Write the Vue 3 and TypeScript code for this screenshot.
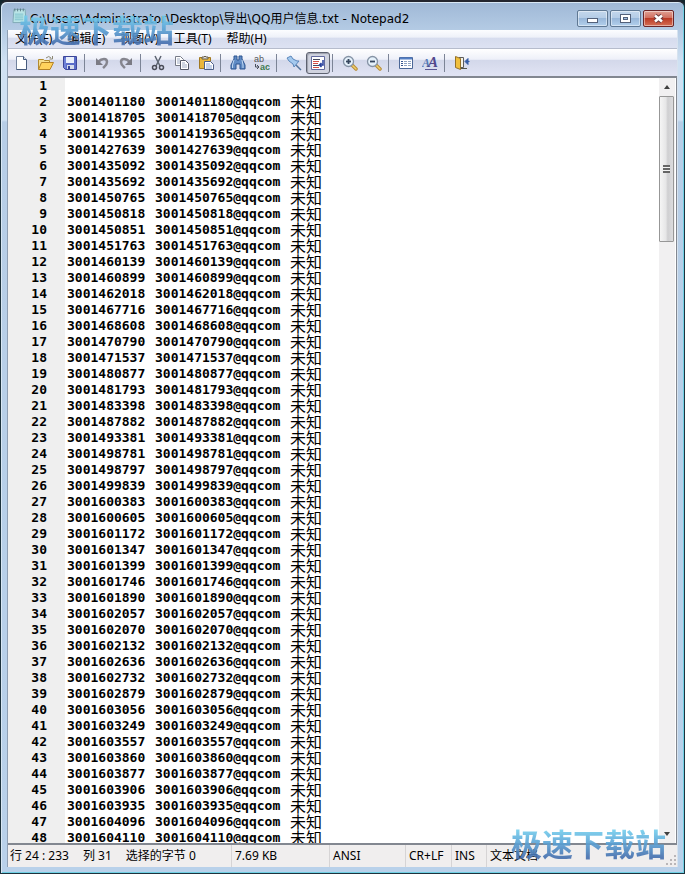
<script setup lang="ts">
interface Tool {
  id: string
  label: string
  pressed?: boolean
}

const menus: string[] = ['文件(F)', '编辑(E)', '视图(V)', '工具(T)', '帮助(H)']

const toolGroups: Tool[][] = [
  [
    { id: 'new', label: '新建' },
    { id: 'open', label: '打开' },
    { id: 'save', label: '保存' },
  ],
  [
    { id: 'undo', label: '撤销' },
    { id: 'redo', label: '重做' },
  ],
  [
    { id: 'cut', label: '剪切' },
    { id: 'copy', label: '复制' },
    { id: 'paste', label: '粘贴' },
  ],
  [
    { id: 'find', label: '查找' },
    { id: 'replace', label: '替换' },
  ],
  [
    { id: 'pin', label: '置顶' },
    { id: 'wrap', label: '自动换行', pressed: true },
  ],
  [
    { id: 'zoomin', label: '放大' },
    { id: 'zoomout', label: '缩小' },
  ],
  [
    { id: 'scheme', label: '语法方案' },
    { id: 'font', label: '自定义方案' },
  ],
  [{ id: 'exit', label: '退出' }],
]

const accounts: string[] = [
  '', '3001401180', '3001418705', '3001419365', '3001427639', '3001435092', '3001435692',
  '3001450765', '3001450818', '3001450851', '3001451763', '3001460139', '3001460899',
  '3001462018', '3001467716', '3001468608', '3001470790', '3001471537', '3001480877',
  '3001481793', '3001483398', '3001487882', '3001493381', '3001498781', '3001498797',
  '3001499839', '3001600383', '3001600605', '3001601172', '3001601347', '3001601399',
  '3001601746', '3001601890', '3001602057', '3001602070', '3001602132', '3001602636',
  '3001602732', '3001602879', '3001603056', '3001603249', '3001603557', '3001603860',
  '3001603877', '3001603906', '3001603935', '3001604096', '3001604110',
]
</script>

<template>
  <div class="window">
    <header class="titlebar">
      <svg class="app-icon" viewBox="0 0 16 18" aria-hidden="true">
        <path d="M2 2h12l1 14H1z" fill="#b9e4e6" stroke="#7fa9b4" />
        <path d="M3 7h9M3 9h9M3 11h9M3 13h9" stroke="#7dc1cb" />
        <path d="M3 1v3M6 1v3M9 1v3M12 1v3" stroke="#5b7884" />
      </svg>
      <h1 class="title">C:\Users\Administrator\Desktop\导出\QQ用户信息.txt - Notepad2</h1>
      <div class="caption">
        <button type="button" aria-label="最小化">
          <svg viewBox="0 0 28 15"><rect x="9.500" y="7.500" width="10" height="4" fill="#fff" stroke="#53617a" /></svg>
        </button>
        <button type="button" aria-label="最大化">
          <svg viewBox="0 0 28 15">
            <rect x="9.500" y="3.500" width="10" height="8" fill="#fff" stroke="#53617a" />
            <rect x="12.500" y="6.500" width="4" height="2" fill="#9fbfe0" stroke="#53617a" />
          </svg>
        </button>
        <button type="button" class="close" aria-label="关闭">
          <svg viewBox="0 0 28 15">
            <path d="M11 4.500l7 6M18 4.500l-7 6" stroke="#6b3a3c" stroke-width="4.500" />
            <path d="M11 4.500l7 6M18 4.500l-7 6" stroke="#fff" stroke-width="2.600" />
          </svg>
        </button>
      </div>
    </header>

    <main class="client">
      <nav class="menubar">
        <button v-for="menu in menus" :key="menu" type="button">{{ menu }}</button>
      </nav>

      <div class="toolbar" role="toolbar">
        <div v-for="(group, g) in toolGroups" :key="g" class="group">
          <button
            v-for="tool in group"
            :key="tool.id"
            type="button"
            :class="{ pressed: tool.pressed }"
            :aria-label="tool.label"
            :aria-pressed="tool.pressed"
          >
            <svg v-if="tool.id === 'new'" viewBox="0 0 16 16">
              <path d="M2.500 1.500h7l3 3v10h-10z" fill="#fff" stroke="#72829d" />
              <path d="M9.500 1.500v3h3" fill="#d5e0ee" stroke="#465a7d" />
              <path d="M12.500 5v9.500h-10" fill="none" stroke="#465a7d" />
            </svg>
            <svg v-else-if="tool.id === 'open'" viewBox="0 0 16 16">
              <path d="M.5 14V4.500h5l1 1h5V8" fill="#f6df91" stroke="#b38b2f" />
              <path d="M.5 14.500l3-7h12l-3.500 7z" fill="#ffd25c" stroke="#b38226" />
              <path d="M8 3q3-3 5 0M14.500 1v3h-3" fill="none" stroke="#8c8873" />
            </svg>
            <svg v-else-if="tool.id === 'save'" viewBox="0 0 16 16">
              <path d="M1.500 1.500h13v13h-11l-2-2z" fill="#5a6cc8" stroke="#3c4699" />
              <path d="M4 2h8v6H4z" fill="#e9effb" />
              <path d="M5 10h7v4H5z" fill="#d6dcea" />
              <path d="M6 11h2v3H6z" fill="#33439a" />
              <path d="M3 3v10" stroke="#8298e8" />
            </svg>
            <svg v-else-if="tool.id === 'undo'" viewBox="0 0 16 16">
              <path d="M4 7c4-4 9-4 9 0 0 3-2 4-4 6" fill="none" stroke="#85858e" stroke-width="2.500" />
              <path d="M2 3v7h7z" fill="#7b7b84" />
            </svg>
            <svg v-else-if="tool.id === 'redo'" viewBox="0 0 16 16">
              <path d="M12 7C8 3 3 3 3 7c0 3 2 4 4 6" fill="none" stroke="#85858e" stroke-width="2.500" />
              <path d="M14 3v7H7z" fill="#7b7b84" />
            </svg>
            <svg v-else-if="tool.id === 'cut'" viewBox="0 0 16 16">
              <path d="M5 1l5 10M11 1L6 11" fill="none" stroke="#5c6470" stroke-width="1.500" />
              <circle cx="4.500" cy="12.500" r="2" fill="none" stroke="#4a4d58" stroke-width="1.500" />
              <circle cx="11.500" cy="12.500" r="2" fill="none" stroke="#4a4d58" stroke-width="1.500" />
            </svg>
            <svg v-else-if="tool.id === 'copy'" viewBox="0 0 16 16">
              <path d="M1.500 1.500h5l3 3v6h-8z" fill="#fff" stroke="#777b87" />
              <path d="M6.500 5.500h5l3 3v6h-8z" fill="#fff" stroke="#555a68" />
              <path d="M3 4h3M3 6h3M3 8h3M8 8h3M8 10h5M8 12h5" stroke="#9eabc3" />
            </svg>
            <svg v-else-if="tool.id === 'paste'" viewBox="0 0 16 16">
              <path d="M1.500 2.500h11v11h-11z" fill="#e9b63b" stroke="#a17821" />
              <path d="M4 4V2h2l1-1 1 1h2v2z" fill="#ddd" stroke="#665c48" />
              <path d="M6.500 6.500h6l3 3v5h-9z" fill="#fff" stroke="#4d5f88" />
              <path d="M8 9h4M8 11h6M8 13h6" stroke="#8ba5d4" />
            </svg>
            <svg v-else-if="tool.id === 'find'" viewBox="0 0 16 16">
              <path d="M4 1h3v4h2V1h3v3l3 6v4h-5V9H6v5H1v-4l3-6z" fill="#5f8ac4" stroke="#2c5490" />
              <path d="M4 5L2.500 10v3M12 5l1 5v3" fill="none" stroke="#bed6f0" />
            </svg>
            <svg v-else-if="tool.id === 'replace'" viewBox="0 0 16 16">
              <text x="0" y="7" class="glyph-ab">ab</text>
              <text x="6" y="15" class="glyph-ac">ac</text>
              <path d="M1.500 9v3h3M3 10l2 2-2 2" fill="none" stroke="#474d5a" />
            </svg>
            <svg v-else-if="tool.id === 'pin'" viewBox="0 0 16 16">
              <path d="M9 9l6 6" stroke="#54749c" stroke-width="1.500" />
              <path d="M1 3l4-2 2 3 4 2 2 0-5 6-1-3-4-3z" fill="#a4c9ee" stroke="#5c88bc" />
            </svg>
            <svg v-else-if="tool.id === 'wrap'" viewBox="0 0 16 16">
              <path d="M1.500 1.500h13v13h-13z" fill="#fff" stroke="#626a9f" />
              <path d="M3 4.500h7M3 10.500h6" stroke="#444a60" />
              <path d="M3 6.500h6M3 8.500h5M3 12.500h6" stroke="#d44d46" />
              <path d="M13 5v5h-3M11.500 8l-2 2 2 2" fill="none" stroke="#263f9c" stroke-width="1.500" />
            </svg>
            <svg v-else-if="tool.id === 'zoomin' || tool.id === 'zoomout'" viewBox="0 0 16 16">
              <path d="M10 10l4 4" stroke="#b78c34" stroke-width="3.500" stroke-linecap="round" />
              <path d="M10 10l4 4" stroke="#efcf6e" stroke-width="1.500" stroke-linecap="round" />
              <circle cx="6.500" cy="6.500" r="5" fill="#e5f1fb" stroke="#8593a5" stroke-width="1.300" />
              <path d="M4 6.500h5" stroke="#35465e" stroke-width="1.800" />
              <path v-if="tool.id === 'zoomin'" d="M6.500 4v5" stroke="#35465e" stroke-width="1.800" />
            </svg>
            <svg v-else-if="tool.id === 'scheme'" viewBox="0 0 16 16">
              <path d="M1.500 2.500h13v11h-13z" fill="#fff" stroke="#4b6797" />
              <path d="M2 3.500h12" stroke="#547fc5" stroke-width="2" />
              <path d="M3 6.500h2M3 8.500h2M3 10.500h2" stroke="#37578f" />
              <path d="M6 6.500h3M10 6.500h3M6 8.500h3M10 8.500h3M6 10.500h3M10 10.500h3" stroke="#8da2c1" />
            </svg>
            <svg v-else-if="tool.id === 'font'" viewBox="0 0 16 16">
              <text x="0" y="12" class="glyph-a1">A</text>
              <text x="6" y="12" class="glyph-a2">A</text>
              <path d="M3 14.500h12" stroke="#5a5794" />
            </svg>
            <svg v-else viewBox="0 0 16 16">
              <path d="M5 2.500h4.500v10H5" fill="#f6f3e8" stroke="#5d5d5d" />
              <path d="M1.500 1.500l5 2v11l-5-2z" fill="#f0bf3c" stroke="#957126" />
              <path d="M7 13.500h6" stroke="#55564a" />
              <path d="M15.500 6.500h-3M14 3.500l-3 3 3 3z" fill="#355da5" stroke="#355da5" />
            </svg>
          </button>
        </div>
      </div>

      <section class="editor">
        <div class="gutter" aria-hidden="true">
          <span v-for="(_, i) in accounts" :key="i">{{ i + 1 }}</span>
        </div>
        <div class="text" role="textbox" aria-multiline="true" aria-label="文本" tabindex="0">
          <div v-for="(account, i) in accounts" :key="i" class="line">
            <template v-if="account">
              <span>{{ account }}</span>
              <span>{{ account }}@qqcom</span>
              <span class="unknown">未知</span>
            </template>
          </div>
        </div>
        <div class="scrollbar">
          <button type="button" aria-label="向上滚动"><i class="arrow up"></i></button>
          <div class="track">
            <div class="thumb"><i class="grip"></i></div>
          </div>
          <button type="button" aria-label="向下滚动"><i class="arrow down"></i></button>
        </div>
      </section>

      <footer class="statusbar">
        <div class="cell position">
          <span>行 24 : 233</span>
          <span>列 31</span>
          <span>选择的字节 0</span>
        </div>
        <div class="cell size">7.69 KB</div>
        <div class="cell encoding">ANSI</div>
        <div class="cell eol">CR+LF</div>
        <div class="cell mode">INS</div>
        <div class="cell filetype">文本文档</div>
        <svg class="resize" viewBox="0 0 10 10" aria-hidden="true">
          <path d="M8 0h2v2H8zM8 4h2v2H8zM8 8h2v2H8zM4 4h2v2H4zM4 8h2v2H4zM0 8h2v2H0z" fill="#b9b6b8" />
        </svg>
      </footer>
    </main>

    <span class="watermark top">极速下载站</span>
    <span class="watermark bottom">极速下载站</span>
  </div>
</template>

<style>
body {
  margin: 0;
  background: #12262e;
}
</style>

<style scoped>
.window {
  position: relative;
  display: flex;
  flex-direction: column;
  box-sizing: border-box;
  height: 100vh;
  padding: 0 6px 6px;
  border: 1px solid #1d323d;
  border-top: 2px solid #23262f;
  border-radius: 7px 7px 0 0;
  background: linear-gradient(#9fb8d6, #b4cbe4 28px, #cfe1f3 60px, #cfe1f3 118px, #b7cee7 120px, #b9d1ea);
  box-shadow: inset 1px 1px 0 #d9e8f5, inset -1px -1px 0 #6fd0e4;
  font-family: "Noto Sans", "Noto Sans CJK SC", sans-serif;
  font-size: 12px;
  color: #000;
}

button {
  margin: 0;
  padding: 0;
  border: 0;
  background: none;
  font: inherit;
  color: inherit;
}

.titlebar {
  display: flex;
  flex: none;
  align-items: center;
  height: 28px;
  padding: 0 4px 0 5px;
}

.app-icon {
  width: 15px;
  height: 18px;
}

.title {
  flex: 1;
  min-width: 0;
  margin: 0 0 0 3px;
  padding-top: 6px;
  overflow: hidden;
  font-family: "DejaVu Sans", "Noto Sans CJK SC", sans-serif;
  font-size: 12px;
  font-weight: 400;
  line-height: 20px;
  white-space: nowrap;
}

.caption {
  display: flex;
  gap: 2px;
  padding-top: 4px;
}

.caption button {
  width: 31px;
  height: 17px;
  box-sizing: border-box;
  border: 1px solid #5f7893;
  border-radius: 2px;
  background: linear-gradient(#c3d7ec, #b4cce6 48%, #98b7d9 50%, #b3d0ec);
  box-shadow: inset 0 0 0 1px rgba(255, 255, 255, 0.45);
}

.caption svg {
  display: block;
  width: 28px;
  height: 15px;
}

.caption .close {
  border-color: #6b2527;
  background: linear-gradient(#e0a093, #d06c5c 48%, #bb3a25 50%, #d46f55);
}

.client {
  display: flex;
  flex: 1;
  flex-direction: column;
  min-height: 0;
  border-left: 1px solid #8f9fb3;
  border-right: 1px solid #d7e3ef;
}

.menubar {
  display: flex;
  flex: none;
  gap: 15px;
  height: 18px;
  padding-left: 7px;
  border-bottom: 1px solid #b6bccc;
  background: linear-gradient(#fcfdff, #eef1f9 40%, #d6dcee 45%, #dde2f2);
  line-height: 18px;
}

.toolbar {
  display: flex;
  flex: none;
  height: 27px;
  padding-left: 2px;
  background: linear-gradient(#fff, #eef0f9 38%, #d3d8ea 42%, #e0e3f3 96%);
}

.group {
  display: flex;
  align-items: center;
}

.group + .group::before {
  content: "";
  width: 1px;
  height: 18px;
  margin: 0 5px 0 2px;
  background: #7c8496;
}

.group button {
  display: flex;
  align-items: center;
  justify-content: center;
  width: 24px;
  height: 22px;
  box-sizing: border-box;
}

.group svg {
  width: 16px;
  height: 16px;
}

.group .pressed {
  border: 1px solid #5d6270;
  border-radius: 3px;
  background: #d0d3df;
  box-shadow: inset 1px 1px 1px #9da0ac;
}

.glyph-ab {
  font: 9px "Liberation Sans", sans-serif;
  fill: #555;
}

.glyph-ac {
  font: bold 9px "Liberation Sans", sans-serif;
  fill: #3d7a4d;
}

.glyph-a1 {
  font: italic bold 12px "Liberation Serif", serif;
  fill: #5278b6;
}

.glyph-a2 {
  font: italic bold 15px "Liberation Serif", serif;
  fill: #51478c;
}

.editor {
  display: flex;
  flex: 1;
  min-height: 0;
  padding-right: 1px;
  overflow: hidden;
  border: solid #828790;
  border-width: 2px 1px 2px 0;
  background: #fff;
  font-family: "DejaVu Sans Mono", "Noto Sans CJK SC", monospace;
  font-size: 13px;
  font-weight: 700;
  line-height: 16px;
}

.gutter {
  display: flex;
  flex: none;
  flex-direction: column;
  width: 39px;
  padding-right: 18px;
  background: #efefef;
  text-align: right;
}

.gutter span {
  flex: none;
  height: 16px;
}

.text {
  flex: 1;
  min-width: 0;
  padding-left: 2px;
  overflow: hidden;
  outline: none;
}

.line {
  display: grid;
  grid-template-columns: 88px 135px auto;
  justify-content: start;
  height: 16px;
  white-space: nowrap;
}

.unknown {
  font-family: "Noto Sans CJK SC", sans-serif;
  font-size: 16px;
  font-weight: 400;
  line-height: 14px;
}

.scrollbar {
  display: flex;
  flex: none;
  flex-direction: column;
  width: 16px;
  background: #f1f0f1;
}

.scrollbar button {
  display: flex;
  flex: none;
  align-items: center;
  justify-content: center;
  height: 18px;
}

.arrow {
  border: 3px solid transparent;
}

.up {
  border-top: 0;
  border-bottom: 4px solid #404040;
}

.down {
  border-bottom: 0;
  border-top: 4px solid #404040;
}

.track {
  flex: 1;
  min-height: 0;
}

.thumb {
  display: flex;
  align-items: center;
  justify-content: center;
  box-sizing: border-box;
  width: 15px;
  height: 20%;
  border: 1px solid #979797;
  border-radius: 1px;
  background: linear-gradient(90deg, #f5f5f5, #e6e6e7 45%, #cfcfd1 60%, #dcdcde);
}

.grip {
  width: 7px;
  height: 8px;
  background: repeating-linear-gradient(#666 0 2px, #f4f4f4 2px 3px);
}

.statusbar {
  display: flex;
  flex: none;
  height: 22px;
  background: #f0eeee;
  line-height: 22px;
  white-space: nowrap;
}

.cell {
  flex: none;
  box-sizing: border-box;
  padding-left: 3px;
}

.cell + .cell {
  border-left: 1px solid #d6d4d5;
}

.position {
  display: flex;
  gap: 14px;
  width: 223px;
  padding-left: 2px;
}

.size {
  width: 98px;
}

.encoding {
  width: 76px;
}

.eol {
  width: 46px;
}

.mode {
  width: 35px;
}

.filetype {
  flex: 1;
}

.resize {
  align-self: flex-end;
  width: 10px;
  height: 10px;
  padding: 0 1px 2px 0;
}

.watermark {
  position: absolute;
  background: linear-gradient(#74cdec 15%, #5aa3d6 50%, #456fae 90%);
  background-clip: text;
  color: transparent;
  font-family: "Noto Sans CJK SC", sans-serif;
  font-size: 31px;
  font-weight: 700;
  line-height: 36px;
  white-space: nowrap;
  opacity: 0.9;
  pointer-events: none;
}

.top {
  top: 9px;
  left: 18px;
}

.bottom {
  right: 18px;
  bottom: 12px;
}
</style>
